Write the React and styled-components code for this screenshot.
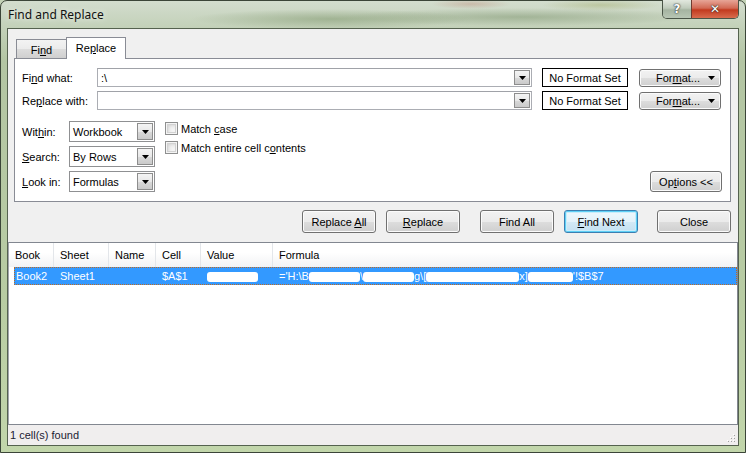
import React from 'react';
import styled, { createGlobalStyle, css } from 'styled-components';

const Global = createGlobalStyle`
  html, body { margin: 0; padding: 0; width: 746px; height: 453px; overflow: hidden; background: #c3d2b6; }
  body { font-family: "Liberation Sans", Arial, sans-serif; font-size: 11px; color: #000; }
  * { box-sizing: border-box; }
`;

const Window = styled.div`
  width: 746px;
  height: 453px;
  display: flex;
  flex-direction: column;
  padding: 0 6px 6px;
  border: 1px solid #3b4538;
  border-radius: 7px 7px 0 0;
  background:
    radial-gradient(ellipse 140px 10px at 330px 18px, rgba(112, 138, 92, 0.45), transparent),
    radial-gradient(ellipse 180px 9px at 520px 16px, rgba(104, 130, 88, 0.4), transparent),
    radial-gradient(ellipse 60px 6px at 600px 4px, rgba(150, 160, 80, 0.35), transparent),
    radial-gradient(ellipse 40px 5px at 470px 3px, rgba(180, 90, 70, 0.25), transparent),
    linear-gradient(180deg, #d3ddce 0px, #c3d1b9 26px, #b3c5a3 60px, #b8cca3 300px, #c2d6ab 453px);
`;

const TitleBar = styled.div`
  height: 27px;
  display: flex;
  justify-content: space-between;
  align-items: flex-start;
  flex: none;
`;

const Title = styled.div`
  font-family: "Noto Sans", "Open Sans", sans-serif;
  font-size: 12px;
  color: #111;
  padding: 5px 0 0 1px;
  text-shadow: 0 0 6px rgba(255, 255, 255, 0.9);
`;

const Caption = styled.div`
  display: flex;
  border: 1px solid #4a5547;
  border-top: none;
  border-radius: 0 0 5px 5px;
  overflow: hidden;
  height: 19px;
  margin-top: -1px;
`;

const CapBtn = styled.div`
  width: ${p => p.$w}px;
  height: 100%;
  display: flex;
  align-items: center;
  justify-content: center;
  font-family: "DejaVu Sans", sans-serif;
  font-weight: bold;
  color: #fff;
  font-size: 12px;
  text-shadow: 0 0 2px #333, 0 0 1px #000;
  ${p => p.$close ? css`
    background: linear-gradient(180deg, #e7a597 0%, #d26a55 45%, #c23a1f 55%, #d96c4e 100%);
    border-left: 1px solid #6f3b30;
  ` : css`
    background: linear-gradient(180deg, #e2e8df 0%, #bfcbbb 45%, #a5b4a1 55%, #b8c6b4 100%);
  `}
`;

const Client = styled.div`
  flex: 1;
  display: flex;
  flex-direction: column;
  background: #f0f0f0;
  border: 1px solid #55624f;
  min-height: 0;
`;

const TabArea = styled.div`
  margin: 8px 7px 0 6px;
  display: flex;
  flex-direction: column;
`;

const TabStrip = styled.div`
  display: flex;
  align-items: flex-end;
  height: 21px;
  padding-left: 2px;
  position: relative;
  z-index: 1;
`;

const Tab = styled.div`
  border: 1px solid #898c95;
  border-bottom: none;
  display: flex;
  align-items: center;
  justify-content: center;
  ${p => p.$active ? css`
    width: 60px;
    height: 22px;
    margin-bottom: -1px;
    margin-left: -1px;
    background: #fff;
    padding-bottom: 1px;
  ` : css`
    width: 51px;
    height: 19px;
    background: linear-gradient(180deg, #f3f3f3 0%, #ebebeb 50%, #dddddd 50%, #cfcfcf 100%);
    padding-top: 2px;
  `}
`;

const Panel = styled.div`
  background: #fff;
  border: 1px solid #898c95;
  padding: 9px 8px 9px 7px;
  display: flex;
  flex-direction: column;
`;

const FieldGrid = styled.div`
  display: grid;
  grid-template-columns: 75px 435px 96px 93px;
  row-gap: 4px;
  align-items: center;
`;

const Label = styled.div`
  white-space: nowrap;
`;

const U = styled.span`
  text-decoration: underline;
  text-underline-offset: 1px;
`;

const ComboBox = styled.div`
  display: flex;
  height: ${p => p.$h || 19}px;
  border: 1px solid ${p => p.$dark ? '#8f9092' : '#abadb3'};
  border-top-color: ${p => p.$dark ? '#8f9092' : '#a0a2a8'};
  background: #fff;
  padding: 1px;
`;

const ComboText = styled.div`
  flex: 1;
  display: flex;
  align-items: center;
  padding-left: 2px;
  white-space: nowrap;
`;

const DropBtn = styled.div`
  width: 16px;
  flex: none;
  border: 1px solid #8d8d8d;
  background: linear-gradient(180deg, #f4f4f4 0%, #e8e8e8 50%, #d9d9d9 51%, #cacaca 100%);
  display: flex;
  align-items: center;
  justify-content: center;
`;

const Arrow = () => (
  <svg width="7" height="4" viewBox="0 0 7 4"><path d="M0 0H7L3.5 4Z" fill="#000" /></svg>
);

const FormatSet = styled.div`
  height: 19px;
  margin-left: 10px;
  border: 1px solid #000;
  background: #fff;
  display: flex;
  align-items: center;
  justify-content: center;
  white-space: nowrap;
`;

const buttonFace = css`
  border: 1px solid #707070;
  border-radius: 3px;
  background: linear-gradient(180deg, #f2f2f2 0%, #ebebeb 50%, #dddddd 51%, #cfcfcf 100%);
  box-shadow: inset 0 0 0 1px #fbfbfb;
  display: flex;
  align-items: center;
  justify-content: center;
  white-space: nowrap;
`;

const FormatBtn = styled.div`
  ${buttonFace}
  height: 18px;
  margin-left: 11px;
  justify-content: flex-start;
  padding: 0 5px 0 16px;
`;

const FormatText = styled.span` flex: 1; `;

const OptionsArea = styled.div`
  margin-top: 11px;
  display: flex;
  align-items: flex-start;
`;

const ComboCol = styled.div`
  display: grid;
  grid-template-columns: 47px 86px;
  row-gap: 4px;
  align-items: center;
`;

const CheckCol = styled.div`
  display: flex;
  flex-direction: column;
  gap: 6px;
  margin-left: 10px;
  padding-top: 1px;
`;

const CheckRow = styled.div`
  display: flex;
  align-items: center;
  gap: 3px;
  height: 13px;
`;

const Box = styled.div`
  width: 13px;
  height: 13px;
  border: 1px solid #8e8f8f;
  background: #f4f4f4;
  box-shadow: inset 0 0 0 1px #f4f4f4, inset 0 0 0 2px #d2d2d2, inset 2px 2px 4px #c8c8c8;
`;

const Spacer = styled.div` flex: 1; `;

const OptionsBtn = styled.div`
  ${buttonFace}
  width: 72px;
  height: 21px;
  align-self: flex-end;
`;

const ButtonRow = styled.div`
  display: flex;
  justify-content: flex-end;
  margin: 8px 7px 0 0;
  height: 23px;
`;

const Btn = styled.div`
  ${buttonFace}
  width: 74px;
  height: 23px;
  margin-left: ${p => p.$gap}px;
  ${p => p.$default && css`
    border-color: #3c7fb1;
    box-shadow: inset 0 0 0 1px #5ed0f6, inset 0 0 0 2px #c9ecfb;
    background: linear-gradient(180deg, #eef8fd 0%, #e4f2fa 50%, #d3e9f6 51%, #c4e0f1 100%);
  `}
`;

const List = styled.div`
  margin-top: 9px;
  flex: 1;
  border: 1px solid #828790;
  border-left-color: #a0a4ab;
  background: #fff;
  display: flex;
  flex-direction: column;
`;

const HeaderRow = styled.div`
  display: grid;
  grid-template-columns: 45px 55px 47px 45px 72px 1fr;
  height: 24px;
  background: linear-gradient(180deg, #ffffff 0%, #ffffff 40%, #f1f2f4 100%);
`;

const HeadCell = styled.div`
  display: flex;
  align-items: center;
  padding-left: 6px;
  border-right: 1px solid #e3e6ea;
  &:last-child { border-right: none; }
`;

const DataRow = styled.div`
  display: grid;
  grid-template-columns: 40px 55px 47px 45px 72px 1fr;
  height: 18px;
  margin-left: 5px;
  background: #3399ff;
  color: #fff;
  outline: 1px dotted #c06a20;
  outline-offset: -1px;
`;

const Cell = styled.div`
  display: flex;
  align-items: center;
  padding-left: ${p => p.$pl ?? 6}px;
  white-space: nowrap;
  overflow: hidden;
`;

const Blot = styled.span`
  display: inline-block;
  width: ${p => p.$w}px;
  height: 10px;
  background: #fff;
  border-radius: 3px;
  margin-top: 1px;
`;

const StatusBar = styled.div`
  height: 20px;
  flex: none;
  background: #f0eeee;
  display: flex;
  align-items: center;
  padding-left: 2px;
  color: #1b1b33;
  position: relative;
`;

const Grip = styled.svg`
  position: absolute;
  right: 2px;
  bottom: 2px;
`;

export default function App() {
  return (
    <>
      <Global />
      <Window>
        <TitleBar>
          <Title>Find and Replace</Title>
          <Caption>
            <CapBtn $w={28}>?</CapBtn>
            <CapBtn $w={47} $close>✕</CapBtn>
          </Caption>
        </TitleBar>
        <Client>
          <TabArea>
            <TabStrip>
              <Tab><span>Fi<U>n</U>d</span></Tab>
              <Tab $active><span>Re<U>p</U>lace</span></Tab>
            </TabStrip>
            <Panel>
              <FieldGrid>
                <Label>Fi<U>n</U>d what:</Label>
                <ComboBox>
                  <ComboText>:\</ComboText>
                  <DropBtn><Arrow /></DropBtn>
                </ComboBox>
                <FormatSet>No Format Set</FormatSet>
                <FormatBtn><FormatText>For<U>m</U>at...</FormatText><Arrow /></FormatBtn>

                <Label>Re<U>p</U>lace with:</Label>
                <ComboBox>
                  <ComboText />
                  <DropBtn><Arrow /></DropBtn>
                </ComboBox>
                <FormatSet>No Format Set</FormatSet>
                <FormatBtn><FormatText>For<U>m</U>at...</FormatText><Arrow /></FormatBtn>
              </FieldGrid>
              <OptionsArea>
                <ComboCol>
                  <Label>Wit<U>h</U>in:</Label>
                  <ComboBox $h={21} $dark><ComboText>Workbook</ComboText><DropBtn><Arrow /></DropBtn></ComboBox>
                  <Label><U>S</U>earch:</Label>
                  <ComboBox $h={21} $dark><ComboText>By Rows</ComboText><DropBtn><Arrow /></DropBtn></ComboBox>
                  <Label><U>L</U>ook in:</Label>
                  <ComboBox $h={21} $dark><ComboText>Formulas</ComboText><DropBtn><Arrow /></DropBtn></ComboBox>
                </ComboCol>
                <CheckCol>
                  <CheckRow><Box /><span>Match <U>c</U>ase</span></CheckRow>
                  <CheckRow><Box /><span>Match entire cell c<U>o</U>ntents</span></CheckRow>
                </CheckCol>
                <Spacer />
                <OptionsBtn><span>Op<U>t</U>ions &lt;&lt;</span></OptionsBtn>
              </OptionsArea>
            </Panel>
          </TabArea>
          <ButtonRow>
            <Btn $gap={0}><span>Replace <U>A</U>ll</span></Btn>
            <Btn $gap={10}><span><U>R</U>eplace</span></Btn>
            <Btn $gap={20}><span>Find All</span></Btn>
            <Btn $gap={10} $default><span><U>F</U>ind Next</span></Btn>
            <Btn $gap={19}><span>Close</span></Btn>
          </ButtonRow>
          <List>
            <HeaderRow>
              <HeadCell>Book</HeadCell>
              <HeadCell>Sheet</HeadCell>
              <HeadCell>Name</HeadCell>
              <HeadCell>Cell</HeadCell>
              <HeadCell>Value</HeadCell>
              <HeadCell>Formula</HeadCell>
            </HeaderRow>
            <DataRow>
              <Cell $pl={2}>Book2</Cell>
              <Cell>Sheet1</Cell>
              <Cell />
              <Cell>$A$1</Cell>
              <Cell><Blot $w={51} /></Cell>
              <Cell>
                ='H:\B<Blot $w={51} />\<Blot $w={51} />g\[<Blot $w={93} />x]<Blot $w={45} />'!$B$7
              </Cell>
            </DataRow>
          </List>
          <StatusBar>
            1 cell(s) found
            <Grip width="10" height="10" viewBox="0 0 10 10">
              {[[8, 2], [8, 5], [5, 5], [8, 8], [5, 8], [2, 8]].map(([x, y], i) => (
                <g key={i}>
                  <rect x={x} y={y} width="1" height="1" fill="#a0a0a0" />
                  <rect x={x - 1} y={y - 1} width="1" height="1" fill="#fff" />
                </g>
              ))}
            </Grip>
          </StatusBar>
        </Client>
      </Window>
    </>
  );
}
